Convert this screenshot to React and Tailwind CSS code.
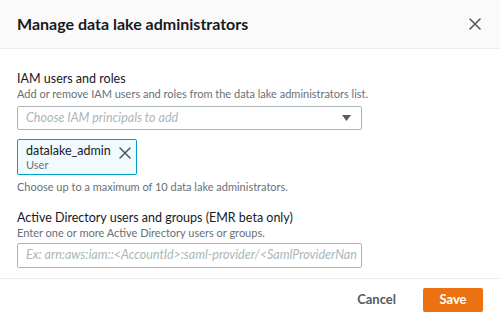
export default function App() {
  const font = { fontFamily: "Lato, 'Liberation Sans', sans-serif" };
  return (
    <div style={font} className="w-[500px] h-[320px] bg-white flex flex-col overflow-hidden text-[#16191f]">
      <div className="h-[49px] shrink-0 bg-[#fafafa] border-b border-[#eaeded] flex items-center justify-between pl-[17px] pr-[19px]">
        <div className="text-[16px] font-bold leading-5 text-[#16191f]">Manage data lake administrators</div>
        <svg width="12" height="12" viewBox="0 0 12 12" fill="none">
          <path d="M1 1 L11 11 M11 1 L1 11" stroke="#545b64" strokeWidth="1.6" strokeLinecap="round" />
        </svg>
      </div>
      <div className="flex-1 flex flex-col pl-[17px] pt-[22px] border-b border-[#eaeded]">
        <div className="text-[12.5px] leading-4 whitespace-nowrap">IAM users and roles</div>
        <div className="text-[11px] leading-[14px] text-[#687078] whitespace-nowrap">Add or remove IAM users and roles from the data lake administrators list.</div>
        <div className="mt-[5px] w-[345px] h-[24px] border border-[#aab7b8] rounded-[2px] flex items-center justify-between pl-[8px] pr-[10px]">
          <span className="text-[12.5px] italic text-[#aab7b8] whitespace-nowrap">Choose IAM principals to add</span>
          <svg width="9" height="6" viewBox="0 0 9 6"><polygon points="0,0 9,0 4.5,6" fill="#545b64" /></svg>
        </div>
        <div className="mt-[9px] self-start w-[120px] h-[36px] border border-[#00a1c9] bg-[#f1faff] rounded-[2px] flex justify-between pl-[8px] pr-[5px] pt-[3px]">
          <div className="flex flex-col">
            <span className="text-[12.5px] leading-4">datalake_admin</span>
            <span className="text-[11px] leading-[11px] text-[#687078]">User</span>
          </div>
          <svg className="mt-[4px]" width="12" height="12" viewBox="0 0 12 12" fill="none">
            <path d="M1 1 L11 11 M11 1 L1 11" stroke="#545b64" strokeWidth="1.6" strokeLinecap="round" />
          </svg>
        </div>
        <div className="mt-[5px] text-[11px] leading-[14px] text-[#687078] whitespace-nowrap">Choose up to a maximum of 10 data lake administrators.</div>
        <div className="mt-[16px] text-[12.5px] leading-4 whitespace-nowrap">Active Directory users and groups (EMR beta only)</div>
        <div className="text-[11px] leading-[14px] text-[#687078] whitespace-nowrap">Enter one or more Active Directory users or groups.</div>
        <div className="mt-[3px] w-[345px] h-[25px] border border-[#aab7b8] rounded-[2px] flex items-center pl-[8px] overflow-hidden">
          <span className="text-[12.5px] italic text-[#aab7b8] whitespace-nowrap">Ex: arn:aws:iam::&lt;AccountId&gt;:saml-provider/&lt;SamlProviderNan</span>
        </div>
      </div>
      <div className="h-[41px] shrink-0 flex items-center justify-end pr-[17px] gap-[27px]">
        <span className="text-[13px] font-bold text-[#545b64]">Cancel</span>
        <div className="w-[60px] h-[24px] bg-[#ec7211] rounded-[2px] flex items-center justify-center text-[13px] font-bold text-white">Save</div>
      </div>
    </div>
  );
}
